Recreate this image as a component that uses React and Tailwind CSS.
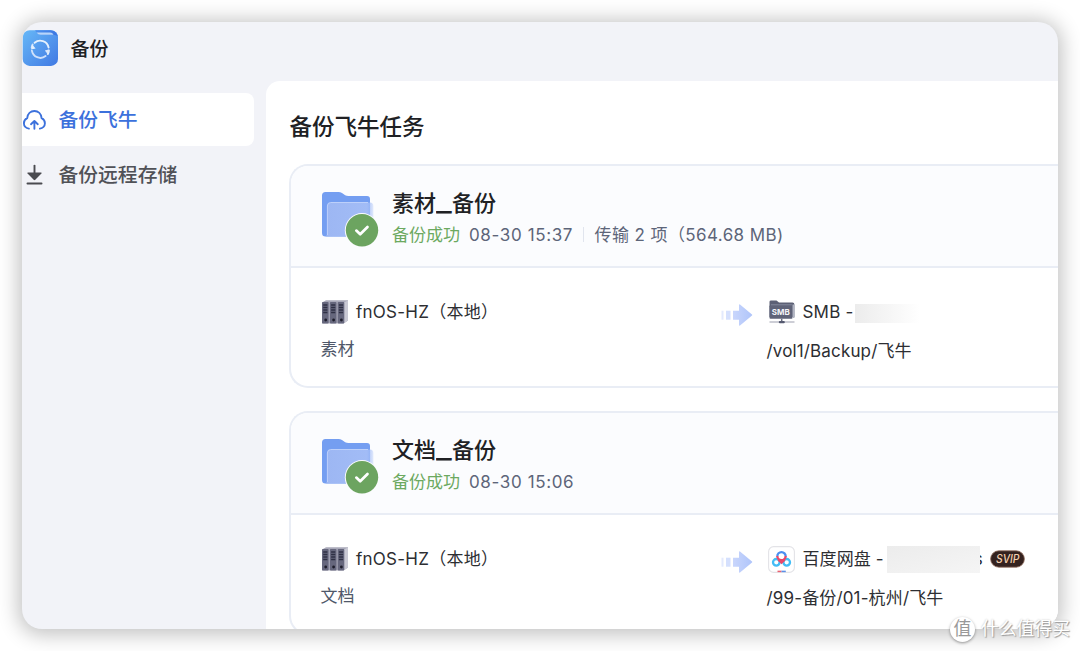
import React from 'react';

function AppLogo() {
  return (
    <svg className="h-9 w-9 shrink-0" viewBox="0 0 36 36" fill="none">
      <defs>
        <linearGradient id="logo" x1="2" y1="4" x2="34" y2="34" gradientUnits="userSpaceOnUse">
          <stop stopColor="#64b4f6" />
          <stop offset="1" stopColor="#437ce4" />
        </linearGradient>
        <linearGradient id="logoTop" x1="12" y1="0" x2="34" y2="6" gradientUnits="userSpaceOnUse">
          <stop stopColor="#4f93ee" />
          <stop offset="1" stopColor="#3c76e2" />
        </linearGradient>
      </defs>
      <rect x="0.7" y="0.3" width="35.3" height="35.6" rx="7" fill="url(#logo)" />
      <path d="M13 0.3H28.5Q34 0.5 35.6 6Q33 4.8 30 4.8H18.5Q16 4.8 15 3Z" fill="url(#logoTop)" />
      <path d="M14.5 2.6H28Q30.5 2.6 31.5 4.8H18.5Q16 4.8 14.5 2.6Z" fill="#b8d5fa" />
      <path d="M12.6 12.8A8.6 8.6 0 0 1 26.6 17.5M26.9 20.6A8.6 8.6 0 0 1 25.8 24" stroke="#e4f0fd" strokeWidth="1.9" strokeLinecap="round" />
      <path d="M23.6 26.1A8.6 8.6 0 0 1 9.9 20.6M9.7 17.5A8.6 8.6 0 0 1 10.6 14.6" stroke="#cfe1fb" strokeWidth="1.9" strokeLinecap="round" />
      <path d="M10 14.2L13.6 18.6L9.2 19.6Z" fill="#e4f0fd" />
      <path d="M22.8 20.6L27.4 19.3L26 24.5Z" fill="#d8e7fc" />
    </svg>
  );
}

function CloudUpIcon() {
  return (
    <svg className="h-6 w-6 shrink-0" viewBox="0 0 24 24" fill="none" stroke="#3c71dc" strokeWidth="1.9" strokeLinecap="round" strokeLinejoin="round">
      <path d="M6.9 20.6C4 20.3 1.9 18.1 1.9 15.3C1.9 12.9 3.2 11 5.2 10.1C5.6 5.9 8.6 3 12.4 3C16.2 3 19.2 5.9 19.6 10.1C21.6 11 22.9 12.9 22.9 15.3C22.9 18.1 20.8 20.3 17.9 20.6" />
      <path d="M12.4 20.8V13.2M9 16.2L12.4 12.9L15.8 16.2" />
    </svg>
  );
}

function DownloadIcon() {
  return (
    <svg className="h-6 w-6 shrink-0" viewBox="0 0 24 24" fill="none">
      <path d="M12.5 2.6V11" stroke="#4a4b50" strokeWidth="1.9" strokeLinecap="round" />
      <path d="M6 9.4H19Q20 9.5 19.4 10.4L13.3 16.8Q12.5 17.5 11.7 16.8L5.6 10.4Q5 9.5 6 9.4Z" fill="#4a4b50" />
      <path d="M5.5 20.6H19.5" stroke="#4a4b50" strokeWidth="2" strokeLinecap="round" />
    </svg>
  );
}

function FolderIcon() {
  return (
    <svg className="h-[58px] w-[60px] shrink-0" viewBox="0 0 60 58" fill="none">
      <defs>
        <linearGradient id="front" x1="6" y1="0" x2="53" y2="0" gradientUnits="userSpaceOnUse">
          <stop stopColor="#9db7f3" />
          <stop offset="0.85" stopColor="#a2bcf6" />
          <stop offset="1" stopColor="#a9c1f8" stopOpacity="0.25" />
        </linearGradient>
      </defs>
      <path d="M1 6.5Q1 3 4.5 3H17.5Q19.4 3 21 4L24.2 6.2Q25.6 7 27.4 7H46Q49 7 49 10V44Q49 47.6 45.5 47.6H4.5Q1 47.6 1 44Z" fill="#749ef1" />
      <path d="M6.3 17Q6.3 13.4 9.8 13.4H49Q52.4 13.4 52.4 17V44.5Q52.4 47.6 49 47.6H4.5Q6.3 46.6 6.3 44Z" fill="url(#front)" />
      <path d="M6.4 46V17Q6.4 13.5 9.8 13.5H47" stroke="#c3d4fa" strokeWidth="0.9" />
      <circle cx="41" cy="41.3" r="17.2" fill="#fbfcfe" />
      <circle cx="41" cy="41.3" r="16.2" fill="#6ca460" />
      <path d="M35.3 41.6L39.2 45.3L46.5 38" stroke="#fff" strokeWidth="2.7" strokeLinecap="round" strokeLinejoin="round" />
    </svg>
  );
}

function ServerIcon() {
  return (
    <svg className="h-6 w-7 shrink-0" viewBox="0 0 28 24">
      <path d="M1 2.5L5 0.3H27V20.5L22.5 23.5H1Z" fill="#a9a9b9" />
      <path d="M22.8 2.4L27 0.4V20.4L22.8 23.4Z" fill="#c9c9d4" />
      {[1, 8.9, 16.7].map((x) => (
        <g key={x}>
          <rect x={x} y="2" width="6.6" height="21.5" rx="1" fill="#66677d" />
          <path d={`M${x + 1.2} 5H${x + 5.4}M${x + 1.2} 7.5H${x + 5.4}M${x + 1.2} 10H${x + 5.4}M${x + 1.2} 12.5H${x + 5.4}`} stroke="#2f3044" strokeWidth="1.4" />
          <circle cx={x + 3.7} cy="20" r="1.4" fill="#1d1d2b" />
        </g>
      ))}
    </svg>
  );
}

function ArrowIcon() {
  return (
    <svg className="h-[22px] w-8 shrink-0" viewBox="0 0 32 22">
      <defs>
        <linearGradient id="arrow" x1="12" y1="0" x2="32" y2="0" gradientUnits="userSpaceOnUse">
          <stop stopColor="#c9d6fc" />
          <stop offset="1" stopColor="#aec4fa" />
        </linearGradient>
      </defs>
      <rect x="0.5" y="6.7" width="2" height="9" fill="#e3eafd" />
      <rect x="5" y="6.7" width="4.5" height="9" fill="#d5e0fd" />
      <path d="M12 6.7H18V0.8Q18.3 0 19 0.5L31 10.4Q31.6 11 31 11.6L19 21.5Q18.3 22 18 21.2V15.7H12Z" fill="url(#arrow)" />
    </svg>
  );
}

function SmbIcon() {
  return (
    <svg className="h-6 w-[26px] shrink-0" viewBox="0 0 26 24">
      <path d="M0.5 1.8Q0.5 0.4 2 0.4H7.5L10 2.5H23.5Q25.4 2.5 25.4 4.4V17H0.5Z" fill="#5c6075" />
      <path d="M2 4.3H22.8V18H2Z" fill="#858a9e" />
      <rect x="0.5" y="5.2" width="23" height="13.6" rx="1" fill="#5f6378" />
      <path d="M23.5 4.5H25.5V18H23.5Z" fill="#b3b6c4" />
      <path d="M12.7 18.8V22" stroke="#696d80" strokeWidth="1.5" />
      <path d="M0.5 22H25.5" stroke="#a4a6b4" strokeWidth="1.1" />
      <rect x="9.8" y="20.9" width="6" height="2.4" rx="1" fill="#555a70" />
      <text x="11.8" y="15.3" textAnchor="middle" fill="#f4f4f8" fontSize="8.2" fontWeight="700" fontFamily="Inter, sans-serif" textLength="18" lengthAdjust="spacingAndGlyphs">SMB</text>
    </svg>
  );
}

function BaiduIcon() {
  return (
    <svg className="h-[27px] w-[27px] shrink-0" viewBox="0 0 27 27" fill="none">
      <rect x="0.6" y="0.6" width="25.8" height="25.8" rx="5" fill="#fff" stroke="#e3e3e7" strokeWidth="1.1" />
      <circle cx="8.3" cy="16.3" r="3.3" stroke="#43bdf6" strokeWidth="2.3" />
      <circle cx="18.7" cy="16.3" r="3.3" stroke="#43bdf6" strokeWidth="2.3" />
      <path d="M9.3 10.4A4.2 4.2 0 1 1 17.7 10.4" stroke="#4b8ff0" strokeWidth="2.3" />
      <path d="M9.3 10A4.2 4.2 0 0 0 17.7 10" stroke="#eb4768" strokeWidth="2.3" />
      <path d="M10.4 13.6L13.5 16.6L16.6 13.6" stroke="#e9486c" strokeWidth="2.2" />
      <path d="M9.5 25.4H13.5" stroke="#eb6070" strokeWidth="1.5" />
      <path d="M13.5 25.4H17.8" stroke="#5a8fe8" strokeWidth="1.5" />
    </svg>
  );
}

function SvipBadge() {
  return (
    <svg className="h-[18px] w-[35px] shrink-0" viewBox="0 0 35 18" fill="none">
      <rect x="0.6" y="0.8" width="33.8" height="16.4" rx="8.2" fill="#34221f" stroke="#94705f" strokeWidth="0.8" />
      <text x="6" y="13" fill="#f2cfae" fontSize="11.2" fontWeight="500" fontStyle="italic" fontFamily="Inter, sans-serif" textLength="23.5" lengthAdjust="spacingAndGlyphs">SVIP</text>
    </svg>
  );
}

function TaskCard({ name, transfer, source, target, path }) {
  return (
    <section className="h-[224px] shrink-0 overflow-hidden rounded-l-[19px] border-2 border-r-0 border-[#e9edf5] bg-white">
      <header className="flex h-[102px] items-start border-b-2 border-[#e9edf5] bg-[#fbfcfe] pt-[23px] pl-[29.5px]">
        <FolderIcon />
        <div className="ml-[11.5px] whitespace-nowrap">
          <h2 className="flex h-[31px] text-[22px] leading-[28px] font-medium text-[#202124]">
            <span>{name}</span>
            <span className="w-4 origin-left scale-x-150 font-bold">_</span>
            <span>备份</span>
          </h2>
          <div className="flex h-[30px] items-center text-[17px] leading-[30px] text-[#5d6579]">
            <span className="text-[#6ca960]">备份成功</span>
            <span className="ml-[9px] tracking-[0.63px]">{transfer.time}</span>
            {transfer.amount && (
              <>
                <span className="mx-[10px] h-[15px] w-px bg-[#e1e5ee]" />
                <span className="ml-[0.5px] tracking-[0.4px]">{transfer.amount}</span>
              </>
            )}
          </div>
        </div>
      </header>
      <div className="flex pt-[30px] pl-[29.5px] text-[17px] text-[#2d2e32]">
        <div className="w-[400px]">
          <div className="flex h-7 items-center whitespace-nowrap">
            <ServerIcon />
            <span className="mt-[2px] ml-[7.5px] tracking-[0.25px]">fnOS-HZ（本地）</span>
          </div>
          <div className="mt-[9px] h-7 leading-7 text-[#4f586a]">{source}</div>
        </div>
        <div className="flex h-[34px] items-center"><ArrowIcon /></div>
        <div className="ml-[14px] whitespace-nowrap">
          <div className="flex h-7 items-center">{target}</div>
          <div className="mt-[11px] h-7 leading-7 tracking-[0.15px]">{path}</div>
        </div>
      </div>
    </section>
  );
}

export default function App() {
  return (
    <div className="relative h-[651px] w-[1080px] overflow-hidden bg-white p-[22px] font-['Inter','Noto_Sans_CJK_SC',sans-serif]">
      <div className="flex h-[607px] w-[1036px] flex-col overflow-hidden rounded-[20px] bg-[#f2f3f8] shadow-[0_2px_20px_4px_rgba(0,0,0,0.24)]">
        <div className="flex h-[59px] shrink-0 items-start pt-2">
          <AppLogo />
          <span className="mt-[2px] ml-[12.5px] text-[19px] leading-9 font-medium text-[#202124]">备份</span>
        </div>
        <div className="flex min-h-0 flex-1">
          <nav className="w-[244px] shrink-0 pt-3 text-[19.8px] font-medium">
            <div className="flex h-[53px] w-[232px] items-center rounded-r-lg bg-white text-[#3c71dc]">
              <CloudUpIcon />
              <span className="mt-[2px] ml-[12.5px]">备份飞牛</span>
            </div>
            <div className="mt-[2px] flex h-[53px] items-center text-[#505157]">
              <DownloadIcon />
              <span className="mt-[2px] ml-[12.5px]">备份远程存储</span>
            </div>
          </nav>
          <main className="flex min-w-0 flex-1 flex-col overflow-hidden rounded-tl-[14px] bg-white pl-[23px]">
            <h1 className="h-[82.5px] shrink-0 pt-[27.5px] pl-[0.5px] text-[22.5px] leading-9 font-medium text-[#202124]">备份飞牛任务</h1>
            <div className="flex flex-col gap-[23.5px]">
              <TaskCard
                name="素材"
                transfer={{ time: '08-30 15:37', amount: '传输 2 项（564.68 MB)' }}
                source="素材"
                target={
                  <>
                    <span className="flex w-9 pl-[2px]"><SmbIcon /></span>
                    <span className="mt-[2px] tracking-[0.2px]">SMB -</span>
                    <span className="mt-1 ml-px h-[19px] w-[65px] bg-linear-to-r from-[#ececec] to-white" />
                  </>
                }
                path="/vol1/Backup/飞牛"
              />
              <TaskCard
                name="文档"
                transfer={{ time: '08-30 15:06' }}
                source="文档"
                target={
                  <>
                    <span className="flex w-9 pl-[1.5px]"><BaiduIcon /></span>
                    <span className="mt-[2px] tracking-[0.1px]">百度网盘 -</span>
                    <span className="z-10 ml-[3px] h-[27px] w-[93px] bg-linear-to-br from-[#ececec] to-[#f5f5f5]" />
                    <span className="mt-[2px] -ml-[6px]">s</span>
                    <span className="ml-[7px]"><SvipBadge /></span>
                  </>
                }
                path="/99-备份/01-杭州/飞牛"
              />
            </div>
          </main>
        </div>
      </div>
      <div className="absolute top-[616px] left-[950px] flex items-center gap-[6px] whitespace-nowrap">
        <span className="flex h-[25px] w-[25px] items-center justify-center rounded-full bg-white text-[18px] leading-none text-[#999] shadow-[0_1px_3px_rgba(0,0,0,0.4)]">值</span>
        <span className="text-[17.8px] leading-[26px] text-white [text-shadow:1px_1px_1px_#999,0_0_2px_#bbb]">什么值得买</span>
      </div>
    </div>
  );
}
